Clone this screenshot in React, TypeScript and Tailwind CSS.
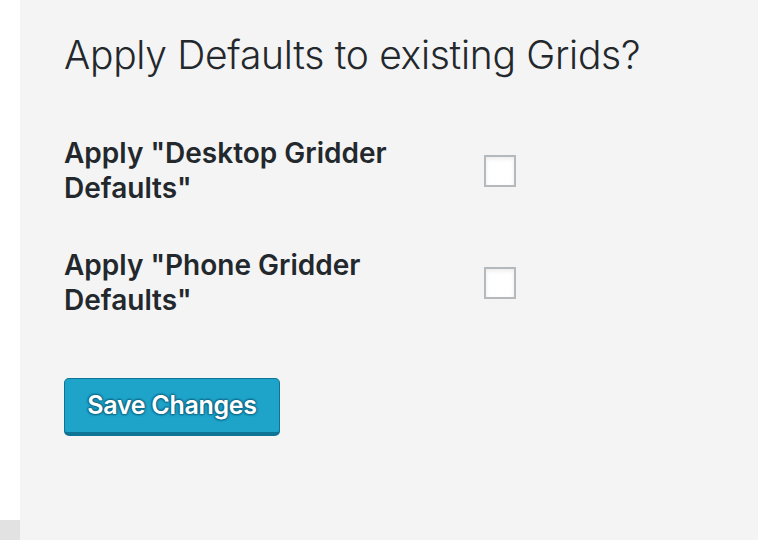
import React from 'react';

const rows = ['Apply "Desktop Gridder Defaults"', 'Apply "Phone Gridder Defaults"'];

export default function App() {
  return (
    <div className="flex h-[540px] w-[758px] overflow-hidden bg-white" style={{ fontFamily: 'Inter, "Noto Sans", sans-serif' }}>
      {/* left admin strip */}
      <div className="flex w-[20px] flex-col justify-end bg-white">
        <div className="h-[20px] bg-[#e2e2e2]" />
      </div>

      <div className="flex-1 bg-[#f4f4f4] pl-[44px] pt-[31px]">
        <h1 className="text-[39px] font-light leading-[47px] tracking-[-0.3px] text-[#23282d]">
          Apply Defaults to existing Grids?
        </h1>

        <div className="mt-[58px] flex flex-col gap-[42px]">
          {rows.map((label) => (
            <div key={label} className="flex items-center">
              <label className="w-[420px] text-[28px] font-semibold leading-[35px] text-[#23282d]">{label}</label>
              <input
                type="checkbox"
                className="h-[32px] w-[32px] appearance-none border-2 border-[#b4b9be] bg-white shadow-[inset_0_2px_4px_rgba(0,0,0,0.08)]"
              />
            </div>
          ))}
        </div>

        <button className="mt-[60px] h-[58px] w-[216px] rounded-[5px] border border-b-[4px] border-[#0e7496] bg-[#1ea3c9] text-[25px] font-semibold tracking-[-0.3px] text-white [text-shadow:0_-1px_2px_#0e6886,1px_0_2px_#0e6886,0_1px_2px_#0e6886,-1px_0_2px_#0e6886]">
          Save Changes
        </button>
      </div>
    </div>
  );
}
